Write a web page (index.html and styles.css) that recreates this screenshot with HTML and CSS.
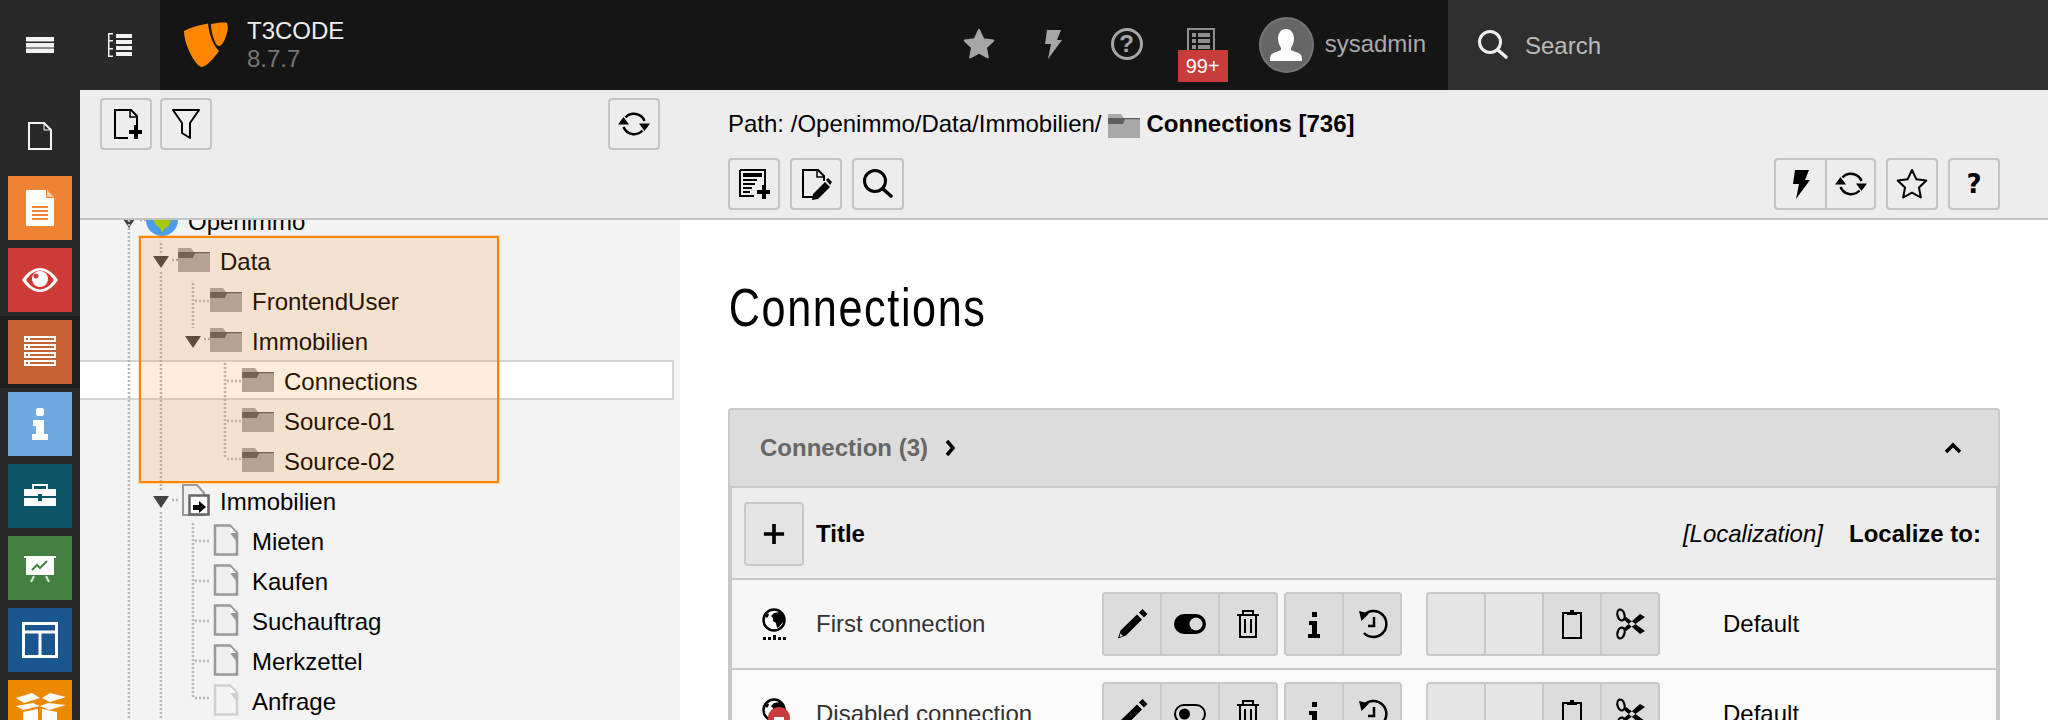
FILE: index.html
```html
<!DOCTYPE html>
<html lang="en">
<head>
<meta charset="utf-8">
<title>T3CODE</title>
<link rel="stylesheet" href="styles.css">
</head>
<body>
<svg class="defs" width="0" height="0" aria-hidden="true">
  <symbol id="i-refresh" viewBox="0 0 32 32"><g fill="none" stroke="currentColor" stroke-width="2.500"><path d="M7.500 9.500A11.500 11.500 0 0 1 26.500 13"/><path d="M24.500 22.500A11.500 11.500 0 0 1 5.500 19"/></g><path d="M0 16.500 5.500 9l5.500 7.500zM21 15.500h11L26.500 23z"/></symbol>
  <symbol id="i-newpage" viewBox="0 0 32 32"><path fill="none" stroke="currentColor" stroke-width="2" d="M27 18V8l-6-6H5v28h13"/><path fill="none" stroke="currentColor" stroke-width="1.500" d="M20 2v7h7"/><path d="M19 22h5v-5h4v5h4v4h-4v5h-4v-5h-5z"/></symbol>
  <symbol id="i-filter" viewBox="0 0 32 32"><path fill="none" stroke="currentColor" stroke-width="2" stroke-linejoin="round" d="M3 2h26L20 15v15l-8-5V15z"/></symbol>
  <symbol id="i-bolt" viewBox="0 0 32 32"><path d="M10 2h14l-4 10h5L11 31l3-15H8z"/></symbol>
  <symbol id="i-staro" viewBox="0 0 32 32"><path fill="none" stroke="currentColor" stroke-width="2" stroke-linejoin="round" d="M16 2l4.300 9.200 10 1.300-7.300 7 1.800 10L16 24.600 7.200 29.500l1.800-10-7.300-7 10-1.300z"/></symbol>
  <symbol id="i-star" viewBox="0 0 32 32"><path fill="currentColor" stroke="currentColor" stroke-width="2" stroke-linejoin="round" d="M16 2l4.300 9.200 10 1.300-7.300 7 1.800 10L16 24.600 7.200 29.500l1.800-10-7.300-7 10-1.300z"/></symbol>
  <symbol id="i-listnew" viewBox="0 0 32 32"><path fill="none" stroke="currentColor" stroke-width="2" d="M2 2h25v15M16 28H2V2"/><path d="M5 5h19v4H5zM5 11h14v2H5zM5 15h12v2H5zM5 19h9v2H5zM5 23h7v2H5zM19 22h5v-5h4v5h4v4h-4v5h-4v-5h-5z"/></symbol>
  <symbol id="i-pageedit" viewBox="0 0 32 32"><path fill="none" stroke="currentColor" stroke-width="2" d="M24 13V8l-6-6H3v27h10"/><path fill="none" stroke="currentColor" stroke-width="1.500" d="M17 2v7h7"/><path d="M25 14l5 5-12 12-6 1 1-6zM26 12l2-2 4 4-2 3z"/></symbol>
  <symbol id="i-search" viewBox="0 0 32 32"><circle cx="13" cy="13" r="10.500" fill="none" stroke="currentColor" stroke-width="3"/><path fill="none" stroke="currentColor" stroke-width="3.500" stroke-linecap="round" d="M21 21l8 7"/></symbol>
  <symbol id="i-pencil" viewBox="0 0 32 32"><path d="M21 6.500l5 5L10 27.500l-8 3 2.500-8zM23 4.500l3.500-3.500 5 5-3.500 3.500z"/><path fill="#dcdcdc" d="M4.500 25.500l2.500 2.500-3.500 1z"/></symbol>
  <symbol id="i-toggleon" viewBox="0 0 32 32"><rect y="6" width="32" height="20" rx="10"/><circle cx="22" cy="16" r="6.500" fill="#dcdcdc"/></symbol>
  <symbol id="i-toggleoff" viewBox="0 0 32 32"><rect x="1" y="7" width="30" height="18" rx="9" fill="none" stroke="currentColor" stroke-width="2"/><circle cx="10.500" cy="16" r="5.500"/></symbol>
  <symbol id="i-trash" viewBox="0 0 32 32"><g fill="none" stroke="currentColor" stroke-width="2"><path d="M5 7h22M11 7V3h10v4M8 7v22h16V7M13 11v14M19 11v14"/></g></symbol>
  <symbol id="i-info" viewBox="0 0 32 32"><path d="M14 4h5v5h-5zM11 13h8v13h3v4H10v-4h4v-9h-3z"/></symbol>
  <symbol id="i-history" viewBox="0 0 32 32"><path fill="none" stroke="currentColor" stroke-width="2.500" d="M8 7A13 13 0 1 1 8 25"/><path d="M3 3l10 2.500-7.500 7.500z"/><path fill="none" stroke="currentColor" stroke-width="2.500" d="M18 9v9h-6"/></symbol>
  <symbol id="i-clip" viewBox="0 0 32 32"><path fill="none" stroke="currentColor" stroke-width="2" d="M7 5h18v25H7z"/><path d="M11 4h3V2h4v2h3v3H11z"/></symbol>
  <symbol id="i-scissors" viewBox="0 0 32 32"><ellipse cx="7" cy="7" rx="3.500" ry="5.500" fill="none" stroke="currentColor" stroke-width="2.200" transform="rotate(-15 7 7)"/><ellipse cx="7" cy="25" rx="3.500" ry="5.500" fill="none" stroke="currentColor" stroke-width="2.200" transform="rotate(15 7 25)"/><path d="M9 11l3-2 19 14-5 3zM9 21l3 2L31 9l-5-3z"/></symbol>
  <symbol id="i-folder" viewBox="0 0 32 32"><path fill="#a9a9a9" d="M0 4h13l3 4h16v20H0z"/><path fill="#5f5f5f" d="M0 8h32v1.300H17L15 14H0z"/></symbol>
  <symbol id="i-page" viewBox="0 0 32 32"><path fill="#efefef" stroke="#999" stroke-width="2.500" d="M5 1.500h15l7 7.500v21.500H5z"/><path fill="#999" d="M20 9h7v9z"/><path fill="#fff" d="M20.500 3v6h5.500z"/></symbol>
  <symbol id="i-pagelight" viewBox="0 0 32 32"><path fill="#f4f4f4" stroke="#d0d0d0" stroke-width="2.500" d="M5 1.500h15l7 7.500v21.500H5z"/><path fill="#d0d0d0" d="M20 9h7v9z"/><path fill="#fff" d="M20.500 3v6h5.500z"/></symbol>
  <symbol id="i-globe" viewBox="0 0 24 32"><circle cx="12" cy="12" r="10.500" fill="#fff" stroke="currentColor" stroke-width="2.500"/><path d="M12 5l6-1 4 6-1 4-4 5-2 1-1-5-3-2 0-3-2-2zM3 8l3-3 1 2-2 3z"/></symbol>
</svg>

<header class="topbar">
  <div class="toggle">
    <svg class="ic28" viewBox="0 0 28 16" fill="#f2f2f2"><path d="M0 0h28v4.500H0zM0 6h28v4.500H0zM0 11.500h28V16H0z"/></svg>
  </div>
  <div class="toggle">
    <svg class="ic24" viewBox="0 0 24 24" fill="#f2f2f2"><path d="M8 1h16v4H8zM8 7h16v4H8zM8 13h16v4H8zM8 19h16v4H8zM0 0h1.500v24H0zM1.500 0H5v1.500H1.500zM1.500 7H5v1.500H1.500zM1.500 15H5v1.500H1.500zM1.500 22.500H5V24H1.500z"/></svg>
  </div>
  <div class="brand">
    <svg class="logo" viewBox="0 0 44 46" fill="#ff8700"><path d="M0 9C5 6 15 3 24 1.500 25 12 29 23 35 29 30 36 22 45 18 45 12 45 0 23 0 9z"/><path d="M27 2C32 1 40 0 43 1 44 4 44 8 43 11 41 18 38 24 35 24 31 24 27 10 27 2z"/></svg>
    <div class="brandtext"><div class="brandname">T3CODE</div><div class="brandver">8.7.7</div></div>
  </div>
  <div class="tools">
    <div class="tool"><svg class="ic32 gray"><use href="#i-star"/></svg></div>
    <div class="tool"><svg class="ic32 gray"><use href="#i-bolt"/></svg></div>
    <div class="tool">
      <svg class="ic32 gray" viewBox="0 0 32 32"><circle cx="16" cy="16" r="14.500" fill="none" stroke="currentColor" stroke-width="3"/></svg>
      <span class="helpmark">?</span>
    </div>
    <div class="tool">
      <svg class="ic28 listic" viewBox="0 0 28 32" fill="#8f8f8f"><path d="M1 1h26v30H1z" fill="none" stroke="#8f8f8f" stroke-width="2"/><path d="M5 5h4v4H5zM11 5h12v4H11zM5 11h4v4H5zM11 11h12v4H11zM5 17h4v4H5zM11 17h12v4H11z"/></svg>
      <span class="badge">99+</span>
    </div>
  </div>
  <div class="user">
    <div class="avatar">
      <svg viewBox="0 0 52 52" width="52" height="52" fill="#fff"><path d="M26 10c5 0 8 4 8 10 0 4-2 7-3 9v2c4 2 9 3 10 5 1 2 1 4 1 6H10c0-2 0-4 1-6 1-2 6-3 10-5v-2c-1-2-3-5-3-9 0-6 3-10 8-10z"/></svg>
    </div>
    <span class="username">sysadmin</span>
  </div>
  <div class="searchbar">
    <svg class="ic32 white"><use href="#i-search"/></svg>
    <span class="searchlabel">Search</span>
  </div>
</header>

<div class="main">
  <nav class="modules">
    <div class="modhead">
      <svg class="ic24x28" viewBox="0 0 24 28" fill="none" stroke="#f4f4f4" stroke-width="2"><path d="M1 1h15l7 7v19H1z"/><path d="M16 1v7h7" stroke-width="1"/></svg>
    </div>
    <div class="mod"><div class="modbox c1"><svg viewBox="0 0 64 64" fill="#fff"><path d="M18 14h20v8h8v28H18z"/><path fill="#f8c8a0" d="M39 14l7 7h-7z"/><path fill="#ef8333" d="M24 30h16v2H24zM24 34h16v2H24zM24 38h16v2H24zM24 42h16v2H24z"/></svg></div></div>
    <div class="mod"><div class="modbox c2"><svg viewBox="0 0 64 64"><path fill="#fff" d="M14 32c5-8 12-12 18-12s13 4 18 12c-5 8-12 12-18 12s-13-4-18-12z"/><path fill="#cc3b35" d="M18 32c4-6 9-9.500 14-9.500S42 26 46 32c-4 6-9 9.500-14 9.500S22 38 18 32z"/><circle cx="32" cy="31" r="8" fill="#fff"/><circle cx="28" cy="28" r="2.500" fill="#cc3b35"/></svg></div></div>
    <div class="mod active"><div class="modbox c3"><svg viewBox="0 0 64 64"><path fill="#fff" d="M16 16h32v6H16zM16 24h32v6H16zM16 32h32v6H16zM16 40h32v6H16z"/><path fill="#c76132" d="M22 18h24v2H22zM22 26h24v2H22zM22 34h24v2H22zM22 42h24v2H22zM18 18h2v2h-2zM18 26h2v2h-2zM18 34h2v2h-2zM18 42h2v2h-2z"/></svg></div></div>
    <div class="mod"><div class="modbox c4"><svg viewBox="0 0 64 64" fill="#fff"><rect x="28" y="16" width="8" height="8" rx="2"/><path d="M25 28h11v14h4v6H24v-6h4v-8h-3z"/></svg></div></div>
    <div class="mod"><div class="modbox c5"><svg viewBox="0 0 64 64" fill="#fff"><path d="M16 25h32v7H34v-2h-4v2H16zM16 34h14v3h4v-3h14v8H16z"/><path fill="none" stroke="#fff" stroke-width="2" d="M25 25v-4h14v4"/></svg></div></div>
    <div class="mod"><div class="modbox c6"><svg viewBox="0 0 64 64"><path fill="#fff" d="M16 20h32v2h-2v17H18V22h-2z"/><path fill="none" stroke="#447f43" stroke-width="2" d="M24 34l5-5 3 3 7-7"/><path fill="none" stroke="#d9e6d9" stroke-width="2" d="M26 40l-3 6M38 40l3 6"/></svg></div></div>
    <div class="mod"><div class="modbox c7"><svg viewBox="0 0 64 64" fill="none" stroke="#fff" stroke-width="3"><path d="M15.500 15.500h33v33h-33zM16 24h32M32 24v24"/></svg></div></div>
    <div class="mod"><div class="modbox c8"><svg viewBox="0 0 64 64" fill="#fff"><path d="M8 18l16-5 8 5-16 5zM34 18l8-5 16 4-16 5zM8 26l17-3 7 3-17 4zM32 26l8-3 18 2-17 5zM15 32l15-3v20H15zM34 29l15 3v17H34z"/></svg></div></div>
  </nav>

  <section class="treecol">
    <div class="head treehead">
      <div class="headrow">
        <div class="btngroup">
          <button class="btn"><svg class="ic32"><use href="#i-newpage"/></svg></button>
          <button class="btn"><svg class="ic32"><use href="#i-filter"/></svg></button>
        </div>
        <button class="btn"><svg class="ic32"><use href="#i-refresh"/></svg></button>
      </div>
    </div>
    <div class="tree">
      <div class="rows">
        <div class="row d0"><span class="tg"><i class="tri"></i></span><svg class="ic32" viewBox="0 0 32 32"><circle cx="16" cy="16" r="16" fill="#4b9cea"/><path fill="#a5c800" d="M7 16h18l-2 6-4 2-3 5-2-5-4-3z"/></svg><span class="lbl">Openimmo</span></div>
        <div class="row d1"><span class="tg"><i class="tri"></i></span><svg class="ic32"><use href="#i-folder"/></svg><span class="lbl">Data</span></div>
        <div class="row d2"><span class="tg"></span><svg class="ic32"><use href="#i-folder"/></svg><span class="lbl">FrontendUser</span></div>
        <div class="row d2"><span class="tg"><i class="tri"></i></span><svg class="ic32"><use href="#i-folder"/></svg><span class="lbl">Immobilien</span></div>
        <div class="row d3 selected"><span class="tg"></span><svg class="ic32"><use href="#i-folder"/></svg><span class="lbl">Connections</span></div>
        <div class="row d3"><span class="tg"></span><svg class="ic32"><use href="#i-folder"/></svg><span class="lbl">Source-01</span></div>
        <div class="row d3"><span class="tg"></span><svg class="ic32"><use href="#i-folder"/></svg><span class="lbl">Source-02</span></div>
        <div class="row d1"><span class="tg"><i class="tri"></i></span><svg class="ic32" viewBox="0 0 32 32"><path fill="#f0f0f0" stroke="#9a9a9a" stroke-width="2" d="M5 1h14l7 8v22H5z"/><path fill="#fff" stroke="#666" stroke-width="2.500" d="M11.500 11.500h19v19h-19z"/><path d="M15 26v-5h6v-4l7 6-7 6v-3h-3v0h-1v0z"/></svg><span class="lbl">Immobilien</span></div>
        <div class="row d2"><span class="tg"></span><svg class="ic32"><use href="#i-page"/></svg><span class="lbl">Mieten</span></div>
        <div class="row d2"><span class="tg"></span><svg class="ic32"><use href="#i-page"/></svg><span class="lbl">Kaufen</span></div>
        <div class="row d2"><span class="tg"></span><svg class="ic32"><use href="#i-page"/></svg><span class="lbl">Suchauftrag</span></div>
        <div class="row d2"><span class="tg"></span><svg class="ic32"><use href="#i-page"/></svg><span class="lbl">Merkzettel</span></div>
        <div class="row d2"><span class="tg"></span><svg class="ic32"><use href="#i-pagelight"/></svg><span class="lbl">Anfrage</span></div>
      </div>
      <svg class="treelines" viewBox="0 0 600 500" width="600" height="500">
        <path d="M49 0V500M81 23V33M81 52V272M81 292V500M113 63V108M113 303V478M145 143V238M60 0H66M92 40H98M115 81H130M124 119H130M147 161H162M147 201H162M147 239H162M92 280H98M115 321H130M115 361H130M115 401H130M115 441H130M115 478H130"/>
      </svg>
      <div class="dragbox"></div>
    </div>
  </section>

  <section class="contentcol">
    <div class="head dochead">
      <div class="path">Path: /Openimmo/Data/Immobilien/ <svg class="pathfolder"><use href="#i-folder"/></svg> <strong class="pathname">Connections [736]</strong></div>
      <div class="headrow">
        <div class="btngroup">
          <button class="btn"><svg class="ic32"><use href="#i-listnew"/></svg></button>
          <button class="btn"><svg class="ic32"><use href="#i-pageedit"/></svg></button>
          <button class="btn"><svg class="ic32"><use href="#i-search"/></svg></button>
        </div>
        <div class="btngroup">
          <div class="joined">
            <button class="btn"><svg class="ic32"><use href="#i-bolt"/></svg></button>
            <button class="btn"><svg class="ic32"><use href="#i-refresh"/></svg></button>
          </div>
          <button class="btn"><svg class="ic32"><use href="#i-staro"/></svg></button>
          <button class="btn"><span class="qmark">?</span></button>
        </div>
      </div>
    </div>
    <div class="docbody">
      <h1>Connections</h1>
      <div class="panel">
        <div class="panelhead">
          <span class="paneltitle">Connection (3)</span>
          <svg class="chev" viewBox="0 0 12 18" fill="none" stroke="#000" stroke-width="3.500"><path d="M3 2l6 7-6 7"/></svg>
          <svg class="chevup" viewBox="0 0 18 12" fill="none" stroke="#000" stroke-width="3.500"><path d="M2 10l7-7 7 7"/></svg>
        </div>
        <div class="table">
          <div class="thead">
            <button class="addbtn"><svg viewBox="0 0 24 24" width="22" height="22" fill="#000"><path d="M10 1h4v9h9v4h-9v9h-4v-9H1v-4h9z"/></svg></button>
            <span class="th">Title</span>
            <em class="loc">[Localization]</em>
            <span class="th">Localize to:</span>
          </div>
          <div class="trow first">
            <div class="ricon">
              <svg viewBox="0 0 24 32" width="24" height="32"><use href="#i-globe"/><path fill="#000" d="M1 29h3v3H1zM6 29h3v3H6zM11 27h3v5h-3zM16 29h3v3h-3zM21 29h3v3h-3z"/></svg>
            </div>
            <span class="rtitle">First connection</span>
            <div class="actions">
              <button class="cell"><svg class="ic32"><use href="#i-pencil"/></svg></button>
              <button class="cell"><svg class="ic32"><use href="#i-toggleon"/></svg></button>
              <button class="cell"><svg class="ic32"><use href="#i-trash"/></svg></button>
            </div>
            <div class="actions g2">
              <button class="cell"><svg class="ic32"><use href="#i-info"/></svg></button>
              <button class="cell"><svg class="ic32"><use href="#i-history"/></svg></button>
            </div>
            <div class="actions g3">
              <button class="cell off"></button>
              <button class="cell off"></button>
              <button class="cell"><svg class="ic32"><use href="#i-clip"/></svg></button>
              <button class="cell"><svg class="ic32"><use href="#i-scissors"/></svg></button>
            </div>
            <span class="rlang">Default</span>
          </div>
          <div class="trow second">
            <div class="ricon">
              <svg viewBox="0 0 24 32" width="24" height="32"><use href="#i-globe"/></svg>
              <span class="hiddenmark"></span>
            </div>
            <span class="rtitle">Disabled connection</span>
            <div class="actions">
              <button class="cell"><svg class="ic32"><use href="#i-pencil"/></svg></button>
              <button class="cell"><svg class="ic32"><use href="#i-toggleoff"/></svg></button>
              <button class="cell"><svg class="ic32"><use href="#i-trash"/></svg></button>
            </div>
            <div class="actions g2">
              <button class="cell"><svg class="ic32"><use href="#i-info"/></svg></button>
              <button class="cell"><svg class="ic32"><use href="#i-history"/></svg></button>
            </div>
            <div class="actions g3">
              <button class="cell off"></button>
              <button class="cell off"></button>
              <button class="cell"><svg class="ic32"><use href="#i-clip"/></svg></button>
              <button class="cell"><svg class="ic32"><use href="#i-scissors"/></svg></button>
            </div>
            <span class="rlang">Default</span>
          </div>
        </div>
      </div>
    </div>
  </section>
</div>
</body>
</html>
```

FILE: styles.css
```css
* { box-sizing: border-box; }
html, body { margin: 0; height: 720px; overflow: hidden; }
body { font: 24px/1.2 "Liberation Sans", Arial, sans-serif; color: #000; background: #fff; }
.defs { position: absolute; }
svg { display: block; flex: none; }
.ic32 { width: 32px; height: 32px; fill: currentColor; }
.gray { color: #a6a6a6; }
.white { color: #efefef; }

/* top bar */
.topbar { display: flex; height: 90px; background: #151515; align-items: stretch; }
.toggle { width: 80px; background: #292929; display: flex; align-items: center; justify-content: center; }
.ic28 { width: 28px; height: 16px; }
.ic24 { width: 24px; height: 24px; }
.brand { display: flex; align-items: center; padding-left: 24px; gap: 19px; }
.logo { width: 44px; height: 46px; }
.brandtext { line-height: 28px; }
.brandname { color: #eee; }
.brandver { color: #777; }
.tools { display: flex; margin-left: auto; }
.tool { width: 74px; position: relative; display: flex; align-items: center; justify-content: center; padding-bottom: 2px; }
.helpmark { position: absolute; left: 0; right: 0; top: 30px; text-align: center; font: bold 24px/28px "Liberation Sans", sans-serif; color: #a6a6a6; }
.listic { height: 32px; }
.badge { position: absolute; top: 50px; left: 14px; width: 50px; height: 32px; background: #c83c3c; color: #fff; font-size: 20px; line-height: 32px; text-align: center; }
.user { display: flex; align-items: center; margin-left: 21px; padding-right: 22px; gap: 11px; }
.avatar { width: 55px; height: 56px; border-radius: 50%; background: #666; border: 2px solid #757575; display: flex; align-items: center; justify-content: center; overflow: hidden; }
.username { color: #aaa; padding-bottom: 2px; }
.searchbar { width: 600px; background: #2f2f2f; display: flex; align-items: center; padding-left: 29px; gap: 16px; color: #bbb; }
.searchlabel { padding-top: 2px; }

/* layout */
.main { display: flex; height: 630px; overflow: hidden; }
.modules { width: 80px; flex: none; background: #292929; display: flex; flex-direction: column; }
.modhead { height: 82px; flex: none; display: flex; justify-content: center; padding-top: 32px; }
.ic24x28 { width: 24px; height: 28px; }
.mod { height: 72px; flex: none; padding: 4px 8px; }
.mod.active { background: #1f1f1f; }
.modbox { width: 64px; height: 64px; }
.modbox svg { width: 64px; height: 64px; }
.c1 { background: #ef8333; }
.c2 { background: #cc3b35; }
.c3 { background: #c76132; }
.c4 { background: #6daae0; }
.c5 { background: #0a5566; }
.c6 { background: #447f43; }
.c7 { background: #19558f; }
.c8 { background: #eb8a00; }

.head { height: 130px; background: #ededed; border-bottom: 2px solid #c3c3c3; flex: none; }
.headrow { display: flex; justify-content: space-between; }
.btngroup { display: flex; gap: 10px; align-items: flex-start; }
.btn { width: 52px; height: 52px; padding: 0; background: #ededed; border: 2px solid #c4c4c4; border-radius: 4px; display: flex; align-items: center; justify-content: center; color: #000; }
.joined { display: flex; }
.joined .btn:first-child { border-radius: 4px 0 0 4px; border-right: 0; width: 51px; }
.joined .btn:last-child { border-radius: 0 4px 4px 0; width: 51px; }
.qmark { font: bold 26px/1 "DejaVu Sans", sans-serif; }

/* tree */
.treecol { width: 600px; flex: none; display: flex; flex-direction: column; background: #f3f3f3; }
.treehead { padding: 8px 20px 0; }
.treehead .btngroup { gap: 8px; }
.tree { position: relative; flex: 1; overflow: hidden; }
.rows { margin-top: -20px; }
.row { display: flex; align-items: center; height: 40px; }
.d0 { padding-left: 34px; }
.d1 { padding-left: 66px; }
.d2 { padding-left: 98px; }
.d3 { padding-left: 130px; }
.tg { width: 32px; flex: none; display: flex; justify-content: center; }
.tri { display: block; width: 0; height: 0; margin: 4px 2px 0 0; border-left: 8px solid transparent; border-right: 8px solid transparent; border-top: 12px solid #444; }
.lbl { margin-left: 10px; padding-top: 5px; white-space: nowrap; }
.selected { width: 594px; background: #fff; box-shadow: inset 0 2px 0 #d4d4d4, inset 0 -2px 0 #d4d4d4, inset -2px 0 0 #d4d4d4; }
.treelines { position: absolute; left: 0; top: 0; fill: none; stroke: #b4b4b4; stroke-width: 2.500; stroke-dasharray: 2 2; pointer-events: none; }
.dragbox { position: absolute; left: 59px; top: 16px; width: 360px; height: 247px; border: 2px solid #ff8700; background: rgba(255, 135, 0, .15); box-shadow: 0 0 0 1px rgba(255, 135, 0, .25); }

/* document */
.contentcol { flex: 1; min-width: 0; display: flex; flex-direction: column; }
.dochead { padding: 0 48px; }
.path { height: 68px; display: flex; align-items: center; gap: 6px; padding-top: 1px; }
.pathfolder { width: 32px; height: 32px; margin-top: 2px; }
.pathname { margin-left: 1px; }
.docbody { padding: 0 48px; }
h1 { margin: 0; padding: 52px 0 0 1px; height: 188px; font: 400 54px/70px "Liberation Sans", sans-serif; letter-spacing: 2px; transform: scaleX(.8); transform-origin: 0 0; }
.panel { border: 2px solid #c8c8c8; border-radius: 4px 4px 0 0; }
.panelhead { height: 78px; background: #dcdcdc; border-bottom: 2px solid #c8c8c8; display: flex; align-items: center; padding: 0 36px 0 30px; }
.paneltitle { font-weight: bold; color: #666; }
.chev { width: 12px; height: 18px; margin-left: 16px; }
.chevup { width: 18px; height: 12px; margin-left: auto; }
.table { border: solid #c8c8c8; border-width: 0 2px; }
.thead { height: 92px; background: #ededed; border-bottom: 2px solid #c8c8c8; display: flex; align-items: center; padding: 2px 15px 0 12px; }
.addbtn { width: 60px; height: 64px; padding: 0; background: #e4e4e4; border: 2px solid #c8c8c8; border-radius: 4px; display: flex; align-items: center; justify-content: center; margin-right: 12px; }
.th { font-weight: bold; }
.loc { margin-left: auto; margin-right: 26px; }
.trow { height: 90px; display: flex; align-items: center; padding-left: 12px; border-bottom: 2px solid #c8c8c8; }
.first { background: #f7f7f7; }
.second { background: #fafafa; }
.ricon { width: 60px; margin-right: 12px; display: flex; justify-content: center; position: relative; }
.hiddenmark { position: absolute; left: 24px; top: 9px; width: 22px; height: 22px; border-radius: 50%; background: #c83c3c; }
.hiddenmark::after { content: ""; position: absolute; left: 6px; top: 10px; width: 10px; height: 6px; background: #fff; }
.rtitle { width: 286px; flex: none; color: #333; }
.actions { display: flex; height: 64px; border: 2px solid #c8c8c8; border-radius: 4px; background: #dcdcdc; overflow: hidden; flex: none; }
.g2 { margin-left: 6px; }
.g3 { margin-left: 24px; }
.cell { width: 58px; height: 60px; padding: 0; background: #dcdcdc; border: 0; border-left: 2px solid #c8c8c8; display: flex; align-items: center; justify-content: center; }
.cell:first-child { border-left: 0; width: 56px; }
.cell.off { background: #e5e5e5; }
.rlang { margin-left: 63px; }
```
